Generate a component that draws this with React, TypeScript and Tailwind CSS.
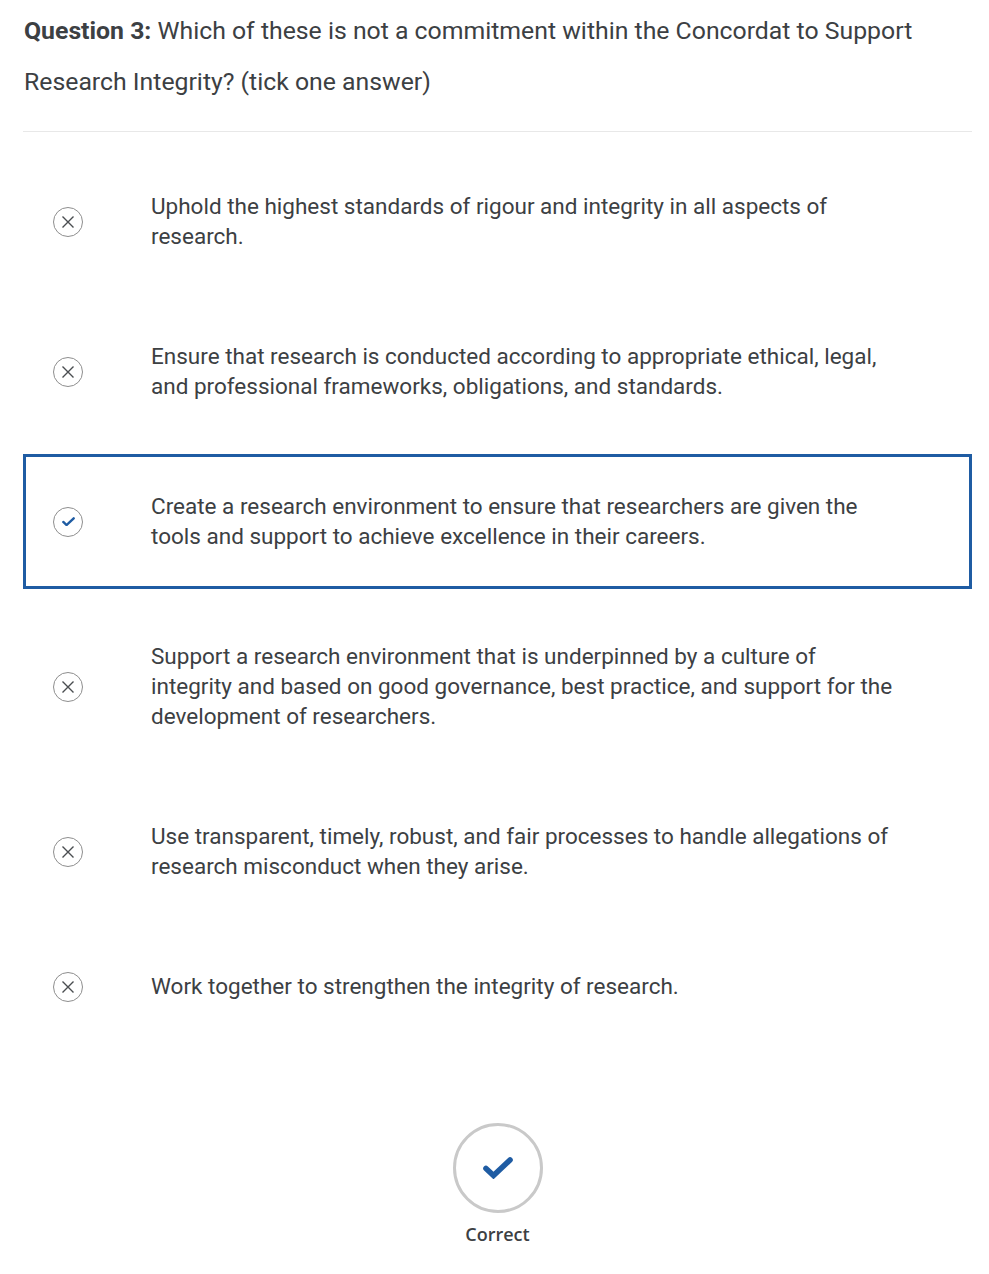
import React from "react";

const options = [
  { text: "Uphold the highest standards of rigour and integrity in all aspects of research.", correct: false },
  { text: "Ensure that research is conducted according to appropriate ethical, legal, and professional frameworks, obligations, and standards.", correct: false },
  { text: "Create a research environment to ensure that researchers are given the tools and support to achieve excellence in their careers.", correct: true },
  { text: "Support a research environment that is underpinned by a culture of integrity and based on good governance, best practice, and support for the development of researchers.", correct: false },
  { text: "Use transparent, timely, robust, and fair processes to handle allegations of research misconduct when they arise.", correct: false },
  { text: "Work together to strengthen the integrity of research.", correct: false },
];

const CrossIcon = () => (
  <svg width="14" height="14" viewBox="0 0 14 14" fill="none" stroke="#4a4d50" strokeWidth="1.4">
    <path d="M1.5 1.5 L12.5 12.5 M12.5 1.5 L1.5 12.5" />
  </svg>
);

const TickIcon = ({ size }: { size: number }) => (
  <svg width={size} height={(size * 22) / 30} viewBox="0 0 30 22" fill="none" stroke="#1f5ca3" strokeWidth="5.6">
    <path d="M3 11.5 L10.5 18.5 L27 3" strokeLinecap="round" strokeLinejoin="miter" />
  </svg>
);

const App: React.FC = () => {
  return (
    <div className="min-h-screen bg-white pl-[23px] pr-[17px] pt-[5px] pb-6 text-[#3c4043] font-['Roboto',sans-serif]">
      {/* Question */}
      <div className="border-b border-[#e8e8e8] pb-[24px] pl-px text-[24.8px] leading-[51px]">
        <span className="font-bold">Question 3:</span> Which of these is not a commitment within the Concordat to Support Research Integrity? (tick one answer)
      </div>

      {/* Options */}
      <div className="mt-[22px] flex flex-col gap-[15px]">
        {options.map((option) => (
          <div
            key={option.text}
            className={`flex items-center border-[3px] py-[33.5px] pl-[27px] ${option.correct ? "border-[#1f5ca3]" : "border-transparent"}`}
          >
            <div className="flex h-[30px] w-[30px] shrink-0 items-center justify-center rounded-full border border-[#8e8e8e]">
              {option.correct ? <TickIcon size={13} /> : <CrossIcon />}
            </div>
            <div className="ml-[68px] mb-[2px] w-[745px] text-[22.5px] leading-[30px]">{option.text}</div>
          </div>
        ))}
      </div>

      {/* Result */}
      <div className="mt-[84px] flex flex-col items-center">
        <div className="flex h-[90px] w-[90px] items-center justify-center rounded-full border-[3px] border-[#c9c9c9]">
          <TickIcon size={30} />
        </div>
        <div className="mt-[9px] font-['Open_Sans',sans-serif] text-[18px] font-semibold leading-[24px]">Correct</div>
      </div>
    </div>
  );
};

export default App;
